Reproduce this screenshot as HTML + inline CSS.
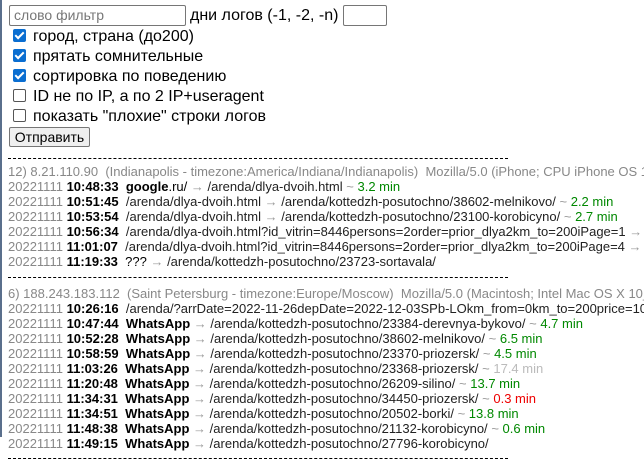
<!DOCTYPE html>
<html><head><meta charset="utf-8"><style>
html,body{margin:0;padding:0;background:#fff;overflow:hidden;width:644px;height:468px}
body{font-family:"Liberation Sans",Arial,sans-serif;font-size:16px;color:#000;position:relative}
.lb{position:absolute;left:0;top:0;width:2px;height:437px;background:#5a6f8c}
.inp{position:absolute;border:1px solid #767676;border-radius:2px;height:19px;box-sizing:border-box;background:#fff}
.row{position:absolute;left:4px;height:20px;line-height:20px;white-space:nowrap}
.cb{display:inline-block;width:13px;height:13px;border-radius:2px;box-sizing:border-box;vertical-align:-1px;margin-right:7px}
.on{background:#0a6ed1;position:relative}
.on:after{content:"";position:absolute;left:4px;top:1px;width:3px;height:7px;border:solid #fff;border-width:0 2px 2px 0;transform:rotate(45deg)}
.off{border:1px solid #555;background:#fff}
.btn{position:absolute;left:9px;top:127px;width:81px;height:20px;box-sizing:border-box;border:1px solid #767676;border-radius:2px;background:#efefef;font-size:14px;line-height:18px;text-align:center}
.log{position:absolute;left:8px;top:0;width:636px;height:468px;overflow:hidden;font-size:13px;white-space:nowrap}
.l{position:absolute;left:0;height:15px;line-height:15px}
.hd{font-size:13px}
.g{color:#888}.t{font-weight:bold}.p{color:#222}.a{color:#999}.m{color:#080}.lg{color:#bbb}.r{color:#e00}
.dash{position:absolute;left:8px;width:500px;height:6px;border-top:1px dashed #000}
</style></head><body>
<div class="lb"></div>
<div class="inp" style="left:9px;top:5px;width:177px;height:21px;font-size:14px;color:#777;line-height:19px;padding-left:4px">слово фильтр</div>
<div class="row" style="left:190px;top:6px">дни логов (-1, -2, -n)</div>
<div class="inp" style="left:343px;top:5px;width:44px;height:21px"></div>
<div class="row" style="left:13px;top:27px"><span class="cb on"></span>город, страна (до200)</div>
<div class="row" style="left:13px;top:47px"><span class="cb on"></span>прятать сомнительные</div>
<div class="row" style="left:13px;top:67px"><span class="cb on"></span>сортировка по поведению</div>
<div class="row" style="left:13px;top:87px"><span class="cb off"></span>ID не по IP, а по 2 IP+useragent</div>
<div class="row" style="left:13px;top:107px"><span class="cb off"></span>показать "плохие" строки логов</div>
<div class="btn">Отправить</div>
<div class="dash" style="top:158px"></div>
<div class="dash" style="top:277px"></div>
<div class="dash" style="top:458px"></div>
<div class="log">
<div class="l g hd" style="top:164px">12) 8.21.110.90&nbsp; (Indianapolis - timezone:America/Indiana/Indianapolis)&nbsp; Mozilla/5.0 (iPhone; CPU iPhone OS 16_0 like Mac OS X)</div>
<div class="l" style="top:179px"><span class="g">20221111</span> <span class="t">10:48:33</span>&nbsp; <span class="t">google</span>.ru/ <span class="a">→</span> <span class="p">/arenda/dlya-dvoih.html</span> <span class="a">~</span> <span class="m">3.2 min</span></div>
<div class="l" style="top:194px"><span class="g">20221111</span> <span class="t">10:51:45</span>&nbsp; <span class="p">/arenda/dlya-dvoih.html</span> <span class="a">→</span> <span class="p">/arenda/kottedzh-posutochno/38602-melnikovo/</span> <span class="a">~</span> <span class="m">2.2 min</span></div>
<div class="l" style="top:209px"><span class="g">20221111</span> <span class="t">10:53:54</span>&nbsp; <span class="p">/arenda/dlya-dvoih.html</span> <span class="a">→</span> <span class="p">/arenda/kottedzh-posutochno/23100-korobicyno/</span> <span class="a">~</span> <span class="m">2.7 min</span></div>
<div class="l" style="top:224px"><span class="g">20221111</span> <span class="t">10:56:34</span>&nbsp; <span class="p">/arenda/dlya-dvoih.html?id_vitrin=8446persons=2order=prior_dlya2km_to=200iPage=1</span> <span class="a">→</span> <span class="p">/arenda/</span></div>
<div class="l" style="top:239px"><span class="g">20221111</span> <span class="t">11:01:07</span>&nbsp; <span class="p">/arenda/dlya-dvoih.html?id_vitrin=8446persons=2order=prior_dlya2km_to=200iPage=4</span> <span class="a">→</span> <span class="p">/arenda/</span></div>
<div class="l" style="top:254px"><span class="g">20221111</span> <span class="t">11:19:33</span>&nbsp; ??? <span class="a">→</span> <span class="p">/arenda/kottedzh-posutochno/23723-sortavala/</span></div>

<div class="l g hd" style="top:286px">6) 188.243.183.112&nbsp; (Saint Petersburg - timezone:Europe/Moscow)&nbsp; Mozilla/5.0 (Macintosh; Intel Mac OS X 10_15_7)</div>
<div class="l" style="top:301px"><span class="g">20221111</span> <span class="t">10:26:16</span>&nbsp; <span class="p">/arenda/?arrDate=2022-11-26depDate=2022-12-03SPb-LOkm_from=0km_to=200price=10000</span></div>
<div class="l" style="top:316px"><span class="g">20221111</span> <span class="t">10:47:44</span>&nbsp; <span class="t">WhatsApp</span> <span class="a">→</span> <span class="p">/arenda/kottedzh-posutochno/23384-derevnya-bykovo/</span> <span class="a">~</span> <span class="m">4.7 min</span></div>
<div class="l" style="top:331px"><span class="g">20221111</span> <span class="t">10:52:28</span>&nbsp; <span class="t">WhatsApp</span> <span class="a">→</span> <span class="p">/arenda/kottedzh-posutochno/38602-melnikovo/</span> <span class="a">~</span> <span class="m">6.5 min</span></div>
<div class="l" style="top:346px"><span class="g">20221111</span> <span class="t">10:58:59</span>&nbsp; <span class="t">WhatsApp</span> <span class="a">→</span> <span class="p">/arenda/kottedzh-posutochno/23370-priozersk/</span> <span class="a">~</span> <span class="m">4.5 min</span></div>
<div class="l" style="top:361px"><span class="g">20221111</span> <span class="t">11:03:26</span>&nbsp; <span class="t">WhatsApp</span> <span class="a">→</span> <span class="p">/arenda/kottedzh-posutochno/23368-priozersk/</span> <span class="a">~</span> <span class="lg">17.4 min</span></div>
<div class="l" style="top:376px"><span class="g">20221111</span> <span class="t">11:20:48</span>&nbsp; <span class="t">WhatsApp</span> <span class="a">→</span> <span class="p">/arenda/kottedzh-posutochno/26209-silino/</span> <span class="a">~</span> <span class="m">13.7 min</span></div>
<div class="l" style="top:391px"><span class="g">20221111</span> <span class="t">11:34:31</span>&nbsp; <span class="t">WhatsApp</span> <span class="a">→</span> <span class="p">/arenda/kottedzh-posutochno/34450-priozersk/</span> <span class="a">~</span> <span class="r">0.3 min</span></div>
<div class="l" style="top:406px"><span class="g">20221111</span> <span class="t">11:34:51</span>&nbsp; <span class="t">WhatsApp</span> <span class="a">→</span> <span class="p">/arenda/kottedzh-posutochno/20502-borki/</span> <span class="a">~</span> <span class="m">13.8 min</span></div>
<div class="l" style="top:421px"><span class="g">20221111</span> <span class="t">11:48:38</span>&nbsp; <span class="t">WhatsApp</span> <span class="a">→</span> <span class="p">/arenda/kottedzh-posutochno/21132-korobicyno/</span> <span class="a">~</span> <span class="m">0.6 min</span></div>
<div class="l" style="top:436px"><span class="g">20221111</span> <span class="t">11:49:15</span>&nbsp; <span class="t">WhatsApp</span> <span class="a">→</span> <span class="p">/arenda/kottedzh-posutochno/27796-korobicyno/</span></div>
</div>
</body></html>
